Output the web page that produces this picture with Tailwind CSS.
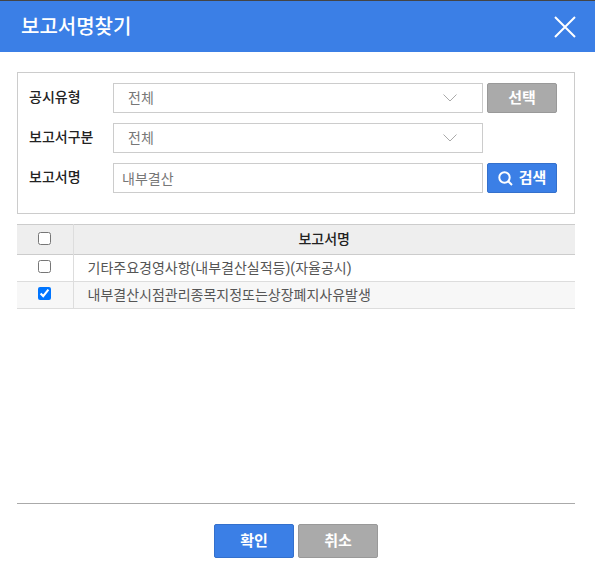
<!DOCTYPE html>
<html lang="ko">
  <head>
    <meta charset="UTF-8" />
    <title>보고서명찾기</title>
    <script src="https://cdn.jsdelivr.net/npm/@tailwindcss/browser@4"></script>
  </head>
  <body class="bg-white font-['Roboto','Noto_Sans_CJK_KR',sans-serif] text-[14px] text-[#333] w-[595px] h-[576px] overflow-hidden">
    <header class="h-[52px] border-t border-[#444] bg-[#3b7fe6] flex items-center justify-between pl-[21px] pr-[19px]">
      <h1 class="text-[20px] font-medium text-white">보고서명찾기</h1>
      <button>
        <svg class="block w-[22px] h-[22px]" viewBox="0 0 22 22" fill="none" stroke="white" stroke-width="2">
          <path d="M1 1 L21 21 M21 1 L1 21" />
        </svg>
      </button>
    </header>

    <main class="pl-[17px] pr-[20px] pt-[20px]">
      <!-- search form -->
      <div class="h-[142px] border border-[#ccc] pl-[11px] pt-[10px] flex flex-col gap-[10px]">
        <div class="flex items-center">
          <label class="w-[84px] font-medium text-[#222] pb-[2px]">공시유형</label>
          <div class="w-[370px] h-[30px] border border-[#ccc] flex items-center justify-between pl-[14px] pr-[25px] text-[#777]">
            <span class="pt-[1px]">전체</span>
            <svg class="w-[14px] h-[8px] mb-[1px]" viewBox="0 0 14 8" fill="none" stroke="#aaa"><path d="M0.5 0.5 L7 7 L13.5 0.5" /></svg>
          </div>
          <button class="ml-[4px] w-[70px] h-[30px] rounded-[2px] border border-[#999] bg-[#aaa] text-white font-bold text-[15px]">선택</button>
        </div>
        <div class="flex items-center">
          <label class="w-[84px] font-medium text-[#222] pb-[2px]">보고서구분</label>
          <div class="w-[370px] h-[30px] border border-[#ccc] flex items-center justify-between pl-[14px] pr-[25px] text-[#777]">
            <span class="pt-[1px]">전체</span>
            <svg class="w-[14px] h-[8px] mb-[1px]" viewBox="0 0 14 8" fill="none" stroke="#aaa"><path d="M0.5 0.5 L7 7 L13.5 0.5" /></svg>
          </div>
        </div>
        <div class="flex items-center">
          <label class="w-[84px] font-medium text-[#222] pb-[2px]">보고서명</label>
          <input class="w-[370px] h-[30px] border border-[#ccc] pl-[8px] text-[#777] outline-none" value="내부결산" />
          <button class="ml-[4px] w-[70px] h-[30px] rounded-[2px] border border-[#3470cc] bg-[#3b7fe6] text-white font-bold text-[15px] flex items-center justify-center gap-[6px]">
            <svg class="w-[15px] h-[15px]" viewBox="0 0 15 15" fill="none" stroke="white" stroke-width="2"><circle cx="6.5" cy="6.5" r="5.2" /><path d="M10.2 10.2 L14 14" /></svg>
            검색
          </button>
        </div>
      </div>

      <!-- results -->
      <table class="mt-[10px] w-[558px] border-collapse table-fixed">
        <thead>
          <tr class="h-[30px] bg-[#eee] border-t border-b border-[#ccc]">
            <th class="w-[56px] border-r border-[#ddd]"><input type="checkbox" class="block mx-auto w-[13px] h-[13px] mb-[3px]" /></th>
            <th class="font-medium text-[#222]">보고서명</th>
          </tr>
        </thead>
        <tbody>
          <tr class="h-[27px] border-b border-[#ddd]">
            <td class="border-r border-[#ddd]"><input type="checkbox" class="block mx-auto w-[13px] h-[13px] mb-[3px]" /></td>
            <td class="pl-[14px] text-[#555]">기타주요경영사항(내부결산실적등)(자율공시)</td>
          </tr>
          <tr class="h-[27px] bg-[#f7f7f7] border-b border-[#ddd]">
            <td class="border-r border-[#ddd]"><input type="checkbox" checked class="block mx-auto w-[13px] h-[13px] mb-[3px]" /></td>
            <td class="pl-[14px] text-[#555]">내부결산시점관리종목지정또는상장폐지사유발생</td>
          </tr>
        </tbody>
      </table>
    </main>

    <footer class="ml-[17px] mr-[20px] mt-[194px] border-t border-[#aaa] pt-[20px] flex justify-center gap-[4px]">
      <button class="w-[80px] h-[34px] rounded-[2px] border border-[#3470cc] bg-[#3b7fe6] text-white font-bold text-[15px]">확인</button>
      <button class="w-[80px] h-[34px] rounded-[2px] border border-[#999] bg-[#aaa] text-white font-bold text-[15px]">취소</button>
    </footer>
  </body>
</html>
